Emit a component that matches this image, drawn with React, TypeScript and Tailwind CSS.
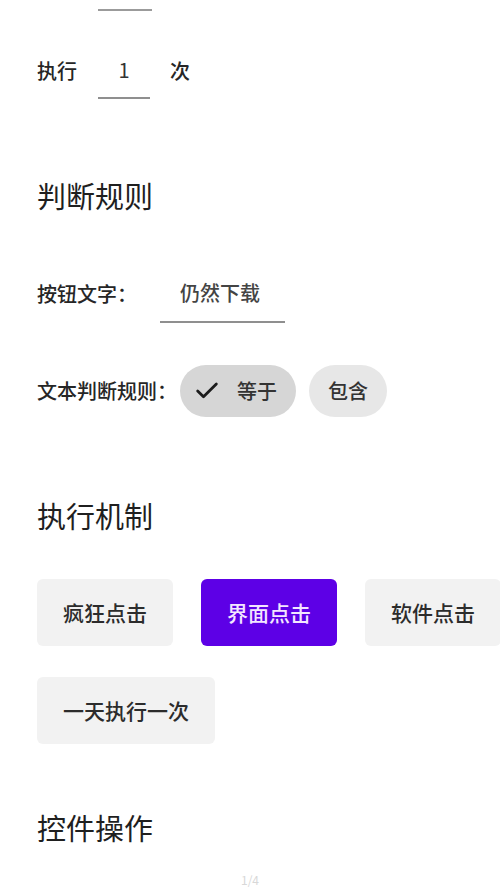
import { Check } from 'lucide-react';

const FONT = { fontFamily: '"Noto Sans CJK SC", "Noto Sans", sans-serif' };

const MODES = ['疯狂点击', '界面点击', '软件点击'];

function Heading({ children, className = '' }: { children: string; className?: string }) {
  return (
    <h2 className={`pl-[37px] h-[40px] flex items-center text-[29px] leading-[40px] text-[#1f1f1f] font-normal ${className}`}>
      {children}
    </h2>
  );
}

function ModeButton({ label, active }: { label: string; active?: boolean }) {
  return (
    <button
      className={`h-[67px] px-[26px] shrink-0 rounded-[6px] text-[21px] leading-none font-medium flex items-center justify-center ${
        active ? 'bg-[#5d00e6] text-[#f3e6ff]' : 'bg-[#f2f2f2] text-[#2c2c2c]'
      }`}
    >
      {label}
    </button>
  );
}

export default function App() {
  return (
    <div className="w-[500px] h-[889px] overflow-hidden bg-white text-[#262626] font-medium" style={FONT}>
      {/* previous field underline, scrolled off */}
      <div className="mt-[9px] ml-[98px] w-[54px] h-[2px] bg-[#9b9b9b]" />

      {/* 执行 N 次 */}
      <div className="mt-[32px] pl-[37px] flex items-center h-[56px] text-[20px]">
        <span>执行</span>
        <div className="ml-[21px] w-[52px] h-[56px] border-b-2 border-[#8f8f8f] flex items-center justify-center text-[#333] font-normal">
          1
        </div>
        <span className="ml-[20px]">次</span>
      </div>

      <Heading className="mt-[76px]">判断规则</Heading>

      {/* 按钮文字 */}
      <div className="mt-[50px] pl-[37px] flex items-center h-[58px] text-[20px]">
        <span>按钮文字：</span>
        <div className="ml-[23px] w-[125px] h-[58px] border-b-2 border-[#8f8f8f] flex items-center pl-[20px] text-[#444]">
          仍然下载
        </div>
      </div>

      {/* 文本判断规则 */}
      <div className="mt-[42px] pl-[37px] flex items-center h-[52px] text-[20px]">
        <span>文本判断规则：</span>
        <div className="ml-[3px] flex items-center gap-[13px]">
          <div className="h-[52px] rounded-full bg-[#d6d6d6] flex items-center pl-[13px] pr-[19px]">
            <Check size={28} strokeWidth={2.4} className="text-[#1c1c1c]" />
            <span className="ml-[16px] text-[#333]">等于</span>
          </div>
          <div className="h-[52px] rounded-full bg-[#e7e7e7] flex items-center px-[19px] text-[#333]">
            包含
          </div>
        </div>
      </div>

      <Heading className="mt-[78px]">执行机制</Heading>

      <div className="mt-[44px] pl-[37px] flex gap-[28px] w-max">
        {MODES.map(m => (
          <ModeButton key={m} label={m} active={m === '界面点击'} />
        ))}
      </div>
      <div className="mt-[31px] pl-[37px] flex">
        <ModeButton label="一天执行一次" />
      </div>

      <Heading className="mt-[63px]">控件操作</Heading>

      <div className="mt-[25px] text-center text-[12px] leading-[16px] text-[#d8d8d8] font-normal">1/4</div>
    </div>
  );
}
